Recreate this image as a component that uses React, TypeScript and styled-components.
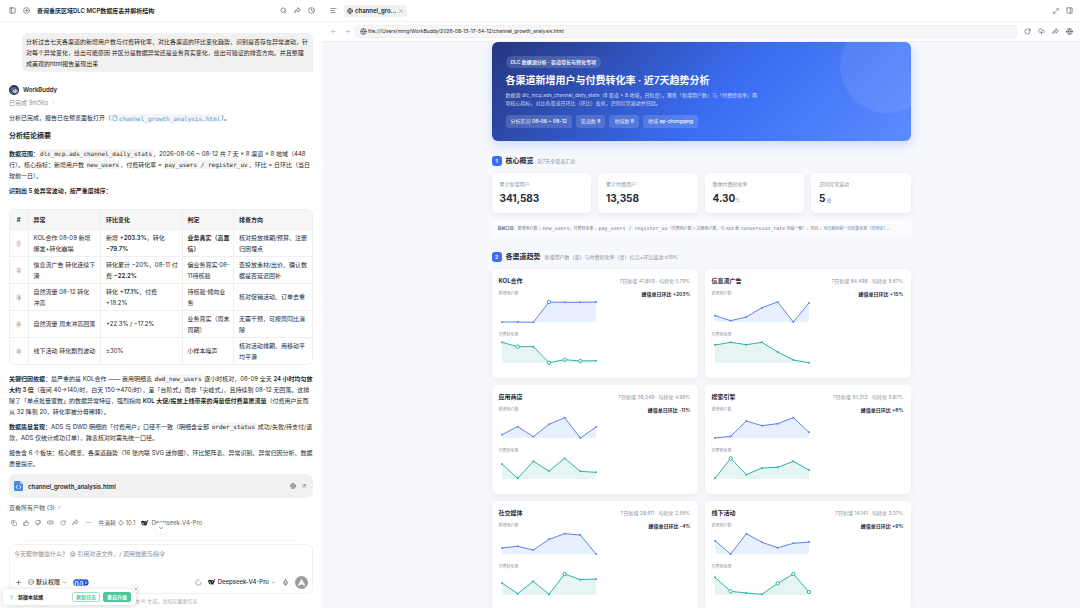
import React from 'react';
import styled, { createGlobalStyle, css } from 'styled-components';
import {
  ArrowLeft, ArrowRight, ArrowUpRight, ArrowUpToLine, ChevronDown, ChevronRight, CircleCheck, CirclePlus,
  Clock, CloudUpload, Copy, Ellipsis, File, Globe, LoaderCircle, Maximize2, Mic, PanelLeft,
  PanelRight, Plus, RotateCw, Search, TextAlignStart, ThumbsDown, ThumbsUp, Volume2, X,
} from 'lucide-react';

const sans = `Inter, "Noto Sans CJK SC", sans-serif`;
const mono = `"DejaVu Sans Mono", "Noto Sans CJK SC", monospace`;

const GlobalStyle = createGlobalStyle`
  * { box-sizing: border-box; }
  html, body { margin: 0; height: 100%; }
  #root { height: 100%; }
  body { font-family: ${sans}; font-size: 6px; line-height: 11px; color: #1f1f1f; background: #fff; }
  button, input, textarea, select { font: inherit; color: inherit; border: 0; background: none; padding: 0; margin: 0; outline: 0; }
  button { cursor: pointer; }
  h1, h2, h3, p, dl, dd { margin: 0; }
  a { color: inherit; text-decoration: none; }
  b { font-weight: 600; }
  svg { display: block; flex: none; }
`;

const Shell = styled.div`
  display: grid;
  grid-template-columns: minmax(0, 322fr) minmax(0, 758fr);
  height: 100vh;
  overflow: hidden;
`;

/* ---------- chat column ---------- */
const Chat = styled.section`
  position: relative;
  display: flex;
  flex-direction: column;
  min-height: 0;
  background: #fff;
`;
const ChatHeader = styled.header`
  display: flex;
  align-items: center;
  gap: 7px;
  flex: none;
  height: 22px;
  padding: 0 7px 0 9px;
  border-bottom: 1px solid #f3f3f3;
`;
const ChatTitle = styled.h1`
  flex: 1;
  font-size: 6px;
  line-height: 10px;
  font-weight: 600;
  white-space: nowrap;
`;
const IconButton = styled.button<{ $color?: string }>`
  display: inline-flex;
  align-items: center;
  justify-content: center;
  flex: none;
  color: ${(p) => p.$color ?? '#4a4a4a'};
`;
const Messages = styled.div`
  flex: 1;
  min-height: 0;
  overflow: hidden;
  padding: 11px 9px 0;
`;
const Bubble = styled.p`
  margin-left: 13px;
  padding: 3px 4px;
  border-radius: 6px 6px 1px 6px;
  background: #f1f1f1;
`;
const Author = styled.div`
  display: flex;
  align-items: center;
  gap: 4px;
  height: 11px;
  margin-top: 12px;
  font-weight: 600;
`;
const Status = styled.button`
  display: flex;
  align-items: center;
  gap: 3px;
  margin-top: 2px;
  color: #8f8f8f;
`;
const Para = styled.p`
  margin-top: 4px;
`;
const Heading = styled.h2`
  margin: 7px 0;
  font-size: 7px;
  line-height: 11px;
  font-weight: 600;
`;
const Code = styled.code`
  padding: 1px;
  border-radius: 2px;
  background: #f5f5f5;
  font-family: ${mono};
  font-size: 6px;
  line-height: 7px;
`;
const FileLink = styled.a`
  display: inline-flex;
  align-items: center;
  gap: 1px;
  height: 8px;
  padding: 0 1px;
  border-radius: 2px;
  background: #f4f5f6;
  color: #4b9bd3;
  font-family: ${mono};
  vertical-align: middle;
`;
const TableFrame = styled.div`
  margin: 13px 0 8px;
  border: 1px solid #efefef;
  border-radius: 6px;
  overflow: hidden;
`;
const Table = styled.table`
  width: 100%;
  table-layout: fixed;
  border-collapse: collapse;
  th, td {
    padding: 2px 2px 2px 5px;
    text-align: left;
    font-weight: 400;
    border-right: 1px solid #efefef;
    border-top: 1px solid #efefef;
    white-space: pre-line;
  }
  tr > :first-child { padding: 0; text-align: center; }
  tr > :last-child { border-right: 0; }
  th { height: 19px; padding-top: 0; padding-bottom: 0; font-weight: 600; background: #f6f6f6; border-top: 0; }
  td { height: 27px; }
  td:first-child { font-family: "Noto Sans CJK SC", sans-serif; font-size: 5px; }
`;
const Col = styled.col<{ $share: number }>`
  width: ${(p) => p.$share}%;
`;
const FileCard = styled.div`
  display: flex;
  align-items: center;
  gap: 5px;
  height: 24px;
  margin-top: 5px;
  padding: 0 6px 0 5px;
  border-radius: 6px;
  background: #f1f1f1;
  color: #555;
`;
const FileName = styled.a`
  flex: 1;
  color: #1f1f1f;
  font-weight: 600;
`;
const MoreLink = styled.a`
  display: flex;
  align-items: center;
  gap: 2px;
  margin-top: 4px;
  color: #555;
`;
const Actions = styled.div`
  display: flex;
  align-items: center;
  gap: 6px;
  margin-top: 4px;
  padding-left: 2px;
  color: #666;
`;
const Inline = styled.span`
  display: inline-flex;
  align-items: center;
  gap: 2px;
  white-space: nowrap;
`;
const Dock = styled.footer`
  position: relative;
  flex: none;
  padding: 0 9px;
`;
const JumpDown = styled.button`
  position: absolute;
  left: 50%;
  top: -18px;
  display: grid;
  place-items: center;
  width: 12px;
  height: 12px;
  margin-left: -6px;
  border-radius: 50%;
  background: #fff;
  box-shadow: 0 1px 3px rgba(0, 0, 0, 0.08);
`;
const Peek = styled.div`
  height: 4px;
  margin: 0 14px 0;
  border-top: 1px solid #f4f4f4;
  border-radius: 4px 4px 0 0;
`;
const Composer = styled.form`
  display: flex;
  flex-direction: column;
  height: 50px;
  padding: 3px 4px 4px;
  border: 1px solid #f0f0f0;
  border-radius: 6px;
  background: #fff;
`;
const Prompt = styled.textarea`
  flex: 1;
  resize: none;
  overflow: hidden;
  line-height: 11px;
  &::placeholder { color: #8c8c8c; opacity: 1; }
`;
const Tools = styled.div`
  display: flex;
  align-items: center;
  gap: 6px;
  height: 14px;
  padding-left: 1px;
  color: #333;
`;
const Spacer = styled.span`
  flex: 1;
`;
const Picker = styled.label`
  display: inline-flex;
  align-items: center;
  gap: 2px;
`;
const Select = styled.select`
  appearance: none;
  field-sizing: content;
  line-height: 10px;
  font-weight: 500;
`;
const SendButton = styled.button`
  display: grid;
  place-items: center;
  width: 13px;
  height: 13px;
  border-radius: 50%;
  background: #9b9b9b;
`;
const Disclaimer = styled.p`
  height: 14px;
  padding-top: 3px;
  font-size: 5px;
  line-height: 9px;
  text-align: center;
  color: #b0b0b0;
`;
const Toast = styled.aside`
  position: absolute;
  left: 3px;
  bottom: 3px;
  display: flex;
  align-items: center;
  gap: 3px;
  width: 133px;
  height: 16px;
  padding: 0 5px 0 6px;
  border-radius: 4px;
  background: #fff;
  box-shadow: 0 1px 6px rgba(0, 0, 0, 0.16);
  font-size: 5px;
  font-weight: 600;
  color: #222;
`;
const ToastText = styled.span`
  flex: 1;
  padding-left: 1px;
`;
const ToastButton = styled.button<{ $solid?: boolean }>`
  height: 10px;
  padding: 0 3px;
  border: 1px solid ${(p) => (p.$solid ? '#4cc79a' : '#a5e2cb')};
  border-radius: 2px;
  background: ${(p) => (p.$solid ? '#4cc79a' : '#fff')};
  color: ${(p) => (p.$solid ? '#fff' : '#4cc79a')};
  line-height: 8px;
`;
const ToastClose = styled.button`
  position: absolute;
  right: -3px;
  top: -3px;
  display: grid;
  place-items: center;
  width: 6px;
  height: 6px;
  border-radius: 50%;
  background: #fff;
  box-shadow: 0 0 2px rgba(0, 0, 0, 0.2);
`;

/* ---------- preview column ---------- */
const Preview = styled.section`
  display: flex;
  flex-direction: column;
  min-width: 0;
  min-height: 0;
`;
const TabBar = styled.header`
  display: flex;
  align-items: center;
  gap: 7px;
  flex: none;
  height: 22px;
  padding: 0 7px 0 8px;
  border-bottom: 1px solid #f3f3f3;
`;
const Tab = styled.div`
  display: flex;
  align-items: center;
  gap: 2px;
  height: 12px;
  padding: 0 3px;
  border-radius: 3px;
  background: #f1f1f1;
  font-weight: 600;
`;
const AddressBar = styled.div`
  display: flex;
  align-items: center;
  gap: 7px;
  flex: none;
  height: 20px;
  padding: 0 7px 0 8px;
  border-bottom: 1px solid #f0f0f0;
`;
const NavButtons = styled.div`
  display: flex;
  gap: 7px;
  margin-right: -3px;
`;
const AddressField = styled.label`
  display: flex;
  align-items: center;
  gap: 1px;
  flex: 1;
  height: 13px;
  padding: 0 4px;
  border: 1px solid #f0f0f0;
  border-radius: 3px;
  background: #f6f6f6;
`;
const AddressInput = styled.input`
  flex: 1;
  min-width: 0;
  height: 11px;
  font-size: 5px;
`;
const Viewport = styled.div`
  flex: 1;
  min-height: 0;
  overflow: hidden;
  background: #f6f8fc;
`;
const Report = styled.main`
  width: 100%;
  max-width: 419px;
  margin: 0 auto;
  color: #1f2937;
  font-size: 5px;
  line-height: 8px;
`;
const Hero = styled.header`
  position: relative;
  overflow: hidden;
  padding: 14px 14px 13px;
  border-radius: 6px;
  background: linear-gradient(135deg, #25367f 0%, #3b6df3 55%, #5b8cff 100%);
  color: #fff;
  &::after {
    content: '';
    position: absolute;
    right: -23px;
    top: -23px;
    width: 94px;
    height: 94px;
    border-radius: 50%;
    background: rgba(255, 255, 255, 0.08);
  }
`;
const HeroShadow = styled.div`
  border-radius: 6px;
  box-shadow: 0 4px 12px rgba(59, 109, 243, 0.22);
`;
const HeroTag = styled.span`
  display: inline-block;
  height: 12px;
  padding: 0 5px;
  border-radius: 6px;
  background: rgba(255, 255, 255, 0.15);
  line-height: 12px;
  font-weight: 500;
  vertical-align: top;
`;
const HeroTitle = styled.h2`
  margin-top: 5px;
  font-size: 10px;
  line-height: 14px;
  font-weight: 600;
`;
const HeroText = styled.p`
  max-width: 254px;
  margin-top: 4px;
  line-height: 8px;
  color: rgba(255, 255, 255, 0.78);
`;
const Chips = styled.div`
  display: flex;
  gap: 4px;
  margin-top: 8px;
`;
const Chip = styled.span`
  height: 13px;
  padding: 0 5px;
  border-radius: 3px;
  background: rgba(255, 255, 255, 0.15);
  line-height: 13px;
  color: rgba(255, 255, 255, 0.85);
  b { font-weight: 500; color: #fff; }
`;
const SectionHead = styled.div`
  display: flex;
  align-items: center;
  gap: 4px;
  height: 11px;
`;
const SectionNo = styled.span`
  display: grid;
  place-items: center;
  width: 10px;
  height: 10px;
  border-radius: 3px;
  background: #3b6df3;
  color: #fff;
  font-weight: 700;
`;
const SectionTitle = styled.h3`
  font-size: 7px;
  line-height: 11px;
  font-weight: 700;
`;
const Muted = styled.span`
  color: #8a93a3;
`;
const Section = styled.section`
  margin-top: 14px;
`;
const card = css`
  border-radius: 5px;
  background: #fff;
  box-shadow: 0 2px 7px rgba(31, 41, 55, 0.06);
`;
const KpiGrid = styled.dl`
  display: grid;
  grid-template-columns: repeat(4, 1fr);
  gap: 7px;
  margin-top: 7px;
`;
const Kpi = styled.div`
  ${card}
  height: 40px;
  padding: 7px 8px;
  dt { color: #8a93a3; }
`;
const KpiValue = styled.dd`
  margin-top: 3px;
  font-size: 10px;
  line-height: 15px;
  font-weight: 700;
  small { font-size: 5px; font-weight: 400; color: #8a93a3; }
`;
const Note = styled.p`
  margin-top: 7px;
  padding: 4px 6px;
  border-radius: 4px;
  background: #fafbfd;
  color: #6b7585;
  font-size: 4px;
  b { font-weight: 600; }
  code { font-family: ${mono}; font-size: 5px; }
`;
const ChartGrid = styled.div`
  display: grid;
  grid-template-columns: repeat(2, 1fr);
  gap: 7px;
  margin-top: 7px;
`;
const ChartCard = styled.article`
  ${card}
  padding: 8px 7px 11px;
`;
const Row = styled.div<{ $top?: number }>`
  display: flex;
  align-items: center;
  justify-content: space-between;
  height: 8px;
  margin-top: ${(p) => p.$top ?? 0}px;
`;
const ChartTitle = styled.h4`
  margin: 0;
  font-size: 6px;
  font-weight: 700;
`;
const SeriesLabel = styled.span`
  font-size: 4px;
  color: #8a93a3;
`;
const Peak = styled.b`
  font-weight: 600;
`;

/* ---------- drawings ---------- */
const WhaleIcon = () => (
  <svg width="8" height="8" viewBox="0 0 24 24" fill="#222">
    <path d="M23.4 5.3c-1.6 1.2-3 .9-4.2-.2-.3 2 .3 3.100 1.200 3.700-.4 1.200-.9 1.800-1.700 2.300.3 3-1 5.200-3 6.600l2 1.800-3.300.1-1.400-.7C6.500 20.500.6 16.500.6 9.400c0-2.600 1.700-4.300 4.200-4.300 2.300 0 4.400 1 6.300 2.800l.2-2.400c2 .3 3.600 1.100 4.700 2.300.9-.1 1.500-.6 1.600-1.900.2-1 .6-2 1.300-2.700.8 1.300 2.500 1.800 4.500 2.100zM3.300 9.600c.3 3.700 3.300 7 7.300 7.600-1.700-1.900-2.800-5.900-7.300-7.600zm8.700.4c.5 1.500 1.500 2.900 3.200 3.200.5-1.600-.9-3.400-3.200-3.200z" fillRule="evenodd" />
  </svg>
);
const ShareIcon = ({ size }: { size: number }) => (
  <svg width={size} height={size} viewBox="0 0 24 24" fill="none" stroke="currentColor" strokeWidth="2" strokeLinejoin="round" strokeLinecap="round">
    <path d="M14 3l8 7-8 7v-4c-5-.3-8 1.500-11 7C3 12 7 7.500 14 7z" />
  </svg>
);
const Avatar = () => (
  <svg width="10" height="10" viewBox="0 0 30 30">
    <circle cx="15" cy="15" r="15" fill="#2d3350" />
    <path d="M4 9 9 3l4 5 8-3 2 6-8 5-9 1z" fill="#59648c" />
    <path d="M10 19c3-6 12-8 16-4 1 5-3 9-8 9-4 0-7-1-8-5z" fill="#d9e2f4" />
    <path d="m15 19 2-3m4 2 2-3" stroke="#2d3350" strokeWidth="2" strokeLinecap="round" />
    <path d="M3 19c3 1 4 5 9 7" stroke="#8e9cc9" strokeWidth="2" fill="none" />
  </svg>
);
const HtmlFileIcon = () => (
  <svg width="9" height="10" viewBox="0 0 27 30">
    <path d="M4 0h14l9 9v17a4 4 0 0 1-4 4H4a4 4 0 0 1-4-4V4a4 4 0 0 1 4-4z" fill="#4a87e2" />
    <path d="m18 0 9 9h-6a3 3 0 0 1-3-3z" fill="#a9c8f5" />
    <path d="m10 13-4 5 4 5m7-10 4 5-4 5" stroke="#fff" strokeWidth="2.500" fill="none" strokeLinecap="round" strokeLinejoin="round" />
  </svg>
);
const PluginIcons = () => (
  <svg width="16" height="7" viewBox="0 0 48 21">
    <circle cx="37" cy="10.500" r="10" fill="#1d4fd8" />
    <path d="M36 9h7m-7 4h5" stroke="#fff" strokeWidth="2" />
    <circle cx="24" cy="10.500" r="10.500" fill="#2f6bf0" />
    <path d="M21 19v-8a4 4 0 0 1 8 0v8" stroke="#fff" strokeWidth="3" fill="none" />
    <circle cx="11" cy="10.500" r="10.500" fill="#2f6bf0" />
    <path d="M7 19v-8a4 4 0 0 1 8 0v8" stroke="#fff" strokeWidth="3" fill="none" />
  </svg>
);

type SeriesProps = { values: number[]; marks?: number[]; color: string; fill: string; label: string };

/* Each series has seven daily samples; values are heights from the top of the plot. */
const Sparkline = ({ values, marks = [], color, fill, label }: SeriesProps) => {
  const pts = values.map((y, i) => [9 + i * 47, y] as const);
  const line = pts.map(([x, y]) => `${x},${y}`).join(' ');
  return (
    <svg width="100" height="28" viewBox="0 0 300 84" role="img" aria-label={label}>
      <polygon points={`9,72 ${line} 291,72`} fill={fill} />
      <polyline points={line} fill="none" stroke={color} strokeWidth="3" strokeLinejoin="round" />
      {pts.map(([x, y], i) =>
        marks.includes(i) ? (
          <circle key={i} cx={x} cy={y} r="5" fill="#fff" stroke={color} strokeWidth="3" />
        ) : (
          <circle key={i} cx={x} cy={y} r="3" fill={color} />
        ),
      )}
    </svg>
  );
};

const channels = [
  { name: 'KOL合作', total: '41,809', rate: '0.79%', peak: '+203%', users: [72, 72, 73, 12, 13, 13, 12], userMarks: [3], conv: [10, 23, 23, 71, 62, 66, 65], convMarks: [1, 3, 4, 5] },
  { name: '信息流广告', total: '84,498', rate: '5.67%', peak: '+15%', users: [53, 68, 57, 29, 12, 72, 15], userMarks: [], conv: [18, 10, 17, 10, 39, 63, 71], convMarks: [] },
  { name: '应用商店', total: '39,249', rate: '4.96%', peak: '-11%', users: [62, 38, 68, 31, 11, 72, 39], userMarks: [], conv: [27, 70, 19, 48, 10, 49, 52], convMarks: [] },
  { name: '搜索引擎', total: '50,313', rate: '5.87%', peak: '+8%', users: [72, 67, 21, 35, 29, 11, 55], userMarks: [], conv: [70, 10, 59, 39, 37, 19, 45], convMarks: [1] },
  { name: '社交媒体', total: '28,611', rate: '2.56%', peak: '-4%', users: [54, 49, 60, 28, 11, 15, 72], userMarks: [], conv: [36, 68, 31, 70, 9, 26, 24], convMarks: [4] },
  { name: '线下活动', total: '14,141', rate: '3.37%', peak: '+9%', users: [32, 72, 11, 37, 53, 40, 36], userMarks: [], conv: [19, 61, 66, 70, 37, 9, 63], convMarks: [1, 4, 5, 6] },
];

const kpis = [
  { label: '累计新增用户', value: '341,583', unit: '' },
  { label: '累计付费用户', value: '13,358', unit: '' },
  { label: '整体付费转化率', value: '4.30', unit: '%' },
  { label: '识别异常波动', value: '5', unit: ' 处' },
];

const anomalies: { no: string; what: string; change: React.ReactNode; verdict: React.ReactNode; check: string }[] = [
  { no: '①', what: 'KOL合作 08-09 新增\n爆发+转化崩塌', change: <>新增 <b>+203.3%</b>，转化 <b>−79.7%</b></>, verdict: <b>业务真实（高置信）</b>, check: '核对投放排期/预算、注册归因埋点' },
  { no: '②', what: '信息流广告 转化连续下滑', change: <>转化累计 −20%，08-11 付费 <b>−22.2%</b></>, verdict: '偏业务真实·08-11待核验', check: '查投放素材/出价、确认数据是否延迟回补' },
  { no: '③', what: '自然流量 08-12 转化\n冲高', change: <>转化 <b>+17.1%</b>，付费 +18.2%</>, verdict: '待核验·倾向业\n务', check: '核对促销活动、订单去重' },
  { no: '④', what: '自然流量 周末冲高回落', change: '+22.3% / −17.2%', verdict: '业务真实（周末周期）', check: '无需干预，可按周同比消除' },
  { no: '⑤', what: '线下活动 转化剧烈波动', change: '±30%', verdict: '小样本噪声', check: '核对活动排期、用移动平均平滑' },
];

const ChatPanel = () => (
  <Chat>
    <ChatHeader>
      <IconButton aria-label="侧边栏"><PanelLeft size={7} /></IconButton>
      <IconButton aria-label="新建"><CirclePlus size={7} /></IconButton>
      <ChatTitle>查询重庆区域DLC MCP数据库表并解析结构</ChatTitle>
      <IconButton aria-label="搜索"><Search size={7} /></IconButton>
      <IconButton aria-label="分享"><ShareIcon size={7} /></IconButton>
      <IconButton aria-label="历史"><Clock size={7} /></IconButton>
    </ChatHeader>
    <Messages>
      <Bubble>
        分析过去七天各渠道的新增用户数与付费转化率，对比各渠道的环比变化趋势，识别是否存在异常波动，针对每个异常变化，给出可能原因 并区分是数据异常还是业务真实变化，给出可验证的排查方向。并且整理成美观的html报告呈现出来
      </Bubble>
      <Author><Avatar />WorkBuddy</Author>
      <Status>已完成 9m56s <ChevronRight size={5} /></Status>
      <Para>
        分析已完成，报告已在预览面板打开（<FileLink href="#report"><File size={6} />channel_growth_analysis.html</FileLink>）。
      </Para>
      <Heading>分析结论摘要</Heading>
      <Para>
        <b>数据范围</b>：<Code>dlc_mcp.ads_channel_daily_stats</Code>，2026-08-06 ~ 08-12 共 7 天 × 8 渠道 × 8 地域（448 行）。核心指标：新增用户数 <Code>new_users</Code>，付费转化率 = <Code>pay_users / register_uv</Code>，环比 = 日环比（当日较前一日）。
      </Para>
      <Para><b>识别出 5 处异常波动，按严重度排序：</b></Para>
      <TableFrame>
        <Table>
          <colgroup>
            <Col $share={6} /><Col $share={24} /><Col $share={27} /><Col $share={17} /><Col $share={26} />
          </colgroup>
          <thead>
            <tr><th>#</th><th>异常</th><th>环比变化</th><th>判定</th><th>排查方向</th></tr>
          </thead>
          <tbody>
            {anomalies.map((a) => (
              <tr key={a.no}><td>{a.no}</td><td>{a.what}</td><td>{a.change}</td><td>{a.verdict}</td><td>{a.check}</td></tr>
            ))}
          </tbody>
        </Table>
      </TableFrame>
      <Para>
        <b>关键归因依据</b>：最严重的是 KOL合作 —— 我用明细表 <Code>dwd_new_users</Code> 逐小时核对，08-09 全天 <b>24 小时均匀放大约 3 倍</b>（夜间 40→140/时，白天 150→470/时），呈「台阶式」而非「尖峰式」，且持续到 08-12 无回落。这排除了「单点批量灌数」的数据异常特征，强烈指向 <b>KOL 大促/投放上线带来的海量低付费意愿流量</b>（付费用户反而从 32 降到 20，转化率被分母稀释）。
      </Para>
      <Para>
        <b>数据质量发现</b>：ADS 与 DWD 明细的「付费用户」口径不一致（明细含全部 <Code>order_status</Code> 成功/失败/待支付/退款，ADS 仅统计成功订单），跨表核对时需先统一口径。
      </Para>
      <Para>
        报告含 6 个板块：核心概览、各渠道趋势（16 张内联 SVG 迷你图）、环比矩阵表、异常识别、异常归因分析、数据质量提示。
      </Para>
      <FileCard>
        <HtmlFileIcon />
        <FileName href="#report">channel_growth_analysis.html</FileName>
        <Globe size={6} />
        <ArrowUpRight size={6} />
      </FileCard>
      <MoreLink href="#files">查看所有产物 (3) <ChevronRight size={5} /></MoreLink>
      <Actions>
        <IconButton $color="#666" aria-label="复制"><Copy size={6} /></IconButton>
        <IconButton $color="#666" aria-label="赞"><ThumbsUp size={6} /></IconButton>
        <IconButton $color="#666" aria-label="踩"><ThumbsDown size={6} /></IconButton>
        <IconButton $color="#666" aria-label="朗读"><Volume2 size={7} /></IconButton>
        <IconButton $color="#666" aria-label="重试"><RotateCw size={6} /></IconButton>
        <IconButton $color="#666" aria-label="分享"><ShareIcon size={7} /></IconButton>
        <IconButton $color="#666" aria-label="更多"><Ellipsis size={7} strokeWidth={1} /></IconButton>
        <Inline>共消耗 ◇ 10.1</Inline>
        <Inline><WhaleIcon />Deepseek-V4-Pro</Inline>
      </Actions>
    </Messages>
    <Dock>
      <JumpDown aria-label="回到底部"><ChevronDown size={6} /></JumpDown>
      <Peek />
      <Composer>
        <Prompt aria-label="消息" placeholder="今天帮你做些什么？ @ 引用对话文件，/ 调用技能与指令" />
        <Tools>
          <IconButton type="button" aria-label="添加"><Plus size={7} /></IconButton>
          <Picker>
            <CircleCheck size={6} />
            <Select aria-label="权限"><option>默认权限</option></Select>
            <ChevronDown size={5} />
          </Picker>
          <PluginIcons />
          <Spacer />
          <LoaderCircle size={7} color="#777" />
          <Picker>
            <WhaleIcon />
            <Select aria-label="模型"><option>Deepseek-V4-Pro</option></Select>
            <ChevronDown size={5} />
          </Picker>
          <IconButton type="button" aria-label="语音"><Mic size={7} /></IconButton>
          <SendButton type="button" aria-label="发送">
            <svg width="9" height="9" viewBox="0 0 24 24"><path d="M12 3 21 20l-9-4-9 4z" fill="#fff" stroke="#fff" strokeWidth="1.500" strokeLinejoin="round" /></svg>
          </SendButton>
        </Tools>
      </Composer>
      <Disclaimer>内容由 AI 生成，请核实重要信息</Disclaimer>
    </Dock>
    <Toast>
      <ArrowUpToLine size={5} color="#4cc79a" />
      <ToastText>新版本就绪</ToastText>
      <ToastButton>更新日志</ToastButton>
      <ToastButton $solid>重启升级</ToastButton>
      <ToastClose aria-label="关闭"><X size={4} /></ToastClose>
    </Toast>
  </Chat>
);

const PreviewPanel = () => (
  <Preview>
    <TabBar>
      <IconButton aria-label="标签列表"><TextAlignStart size={7} /></IconButton>
      <Tab><Globe size={6} />channel_gro...<IconButton $color="#888" aria-label="关闭标签"><X size={6} /></IconButton></Tab>
      <Spacer />
      <IconButton aria-label="全屏"><Maximize2 size={6} /></IconButton>
      <IconButton aria-label="面板"><PanelRight size={7} /></IconButton>
    </TabBar>
    <AddressBar>
      <NavButtons>
        <IconButton $color="#b0b0b0" aria-label="后退"><ArrowLeft size={7} /></IconButton>
        <IconButton $color="#b0b0b0" aria-label="前进"><ArrowRight size={7} /></IconButton>
      </NavButtons>
      <AddressField>
        <Globe size={7} color="#444" />
        <AddressInput aria-label="地址" defaultValue="file:///Users/ming/WorkBuddy/2026-08-13-17-54-12/channel_growth_analysis.html" />
      </AddressField>
      <IconButton aria-label="刷新"><RotateCw size={7} /></IconButton>
      <IconButton aria-label="上传"><CloudUpload size={7} /></IconButton>
      <IconButton aria-label="分享"><ShareIcon size={7} /></IconButton>
      <IconButton aria-label="浏览器打开"><Globe size={7} /></IconButton>
    </AddressBar>
    <Viewport>
      <Report id="report">
        <HeroShadow>
          <Hero>
            <HeroTag>DLC 数据湖分析 · 渠道增长与转化专项</HeroTag>
            <HeroTitle>各渠道新增用户与付费转化率 · 近7天趋势分析</HeroTitle>
            <HeroText>
              数据源 dlc_mcp.ads_channel_daily_stats（8 渠道 × 8 地域，日粒度），聚焦「新增用户数」与「付费转化率」两项核心指标，对比各渠道日环比（环比）变化，识别异常波动并归因。
            </HeroText>
            <Chips>
              <Chip>分析区间 <b>08-06 ~ 08-12</b></Chip>
              <Chip>渠道数 <b>8</b></Chip>
              <Chip>地域数 <b>8</b></Chip>
              <Chip>地域 <b>ap-chongqing</b></Chip>
            </Chips>
          </Hero>
        </HeroShadow>
        <Section>
          <SectionHead>
            <SectionNo>1</SectionNo><SectionTitle>核心概览</SectionTitle><Muted>近7天全渠道汇总</Muted>
          </SectionHead>
          <KpiGrid>
            {kpis.map((k) => (
              <Kpi key={k.label}>
                <dt>{k.label}</dt>
                <KpiValue>{k.value}<small>{k.unit}</small></KpiValue>
              </Kpi>
            ))}
          </KpiGrid>
          <Note>
            <b>指标口径</b>：新增用户数 = <code>new_users</code>；付费转化率 = <code>pay_users / register_uv</code>（付费用户数 ÷ 注册用户数，与 ADS 表 <code>conversion_rate</code> 字段一致）。环比 = 当日相对前一日的变化率（日环比）。
          </Note>
        </Section>
        <Section>
          <SectionHead>
            <SectionNo>2</SectionNo><SectionTitle>各渠道趋势</SectionTitle><Muted>新增用户数（蓝）与付费转化率（青）· 红点=环比波动 ≥15%</Muted>
          </SectionHead>
          <ChartGrid>
            {channels.map((c) => (
              <ChartCard key={c.name}>
                <Row><ChartTitle>{c.name}</ChartTitle><Muted>7日新增 {c.total} · 均转化 {c.rate}</Muted></Row>
                <Row $top={5}><SeriesLabel>新增用户数</SeriesLabel><Peak>峰值单日环比 {c.peak}</Peak></Row>
                <Sparkline label={`${c.name} 新增用户数`} values={c.users} marks={c.userMarks} color="#5b85f5" fill="#e8effe" />
                <Row $top={5}><SeriesLabel>付费转化率</SeriesLabel></Row>
                <Sparkline label={`${c.name} 付费转化率`} values={c.conv} marks={c.convMarks} color="#2bb3ab" fill="#e6f5f4" />
              </ChartCard>
            ))}
          </ChartGrid>
        </Section>
      </Report>
    </Viewport>
  </Preview>
);

export default function App() {
  return (
    <>
      <GlobalStyle />
      <Shell>
        <ChatPanel />
        <PreviewPanel />
      </Shell>
    </>
  );
}
